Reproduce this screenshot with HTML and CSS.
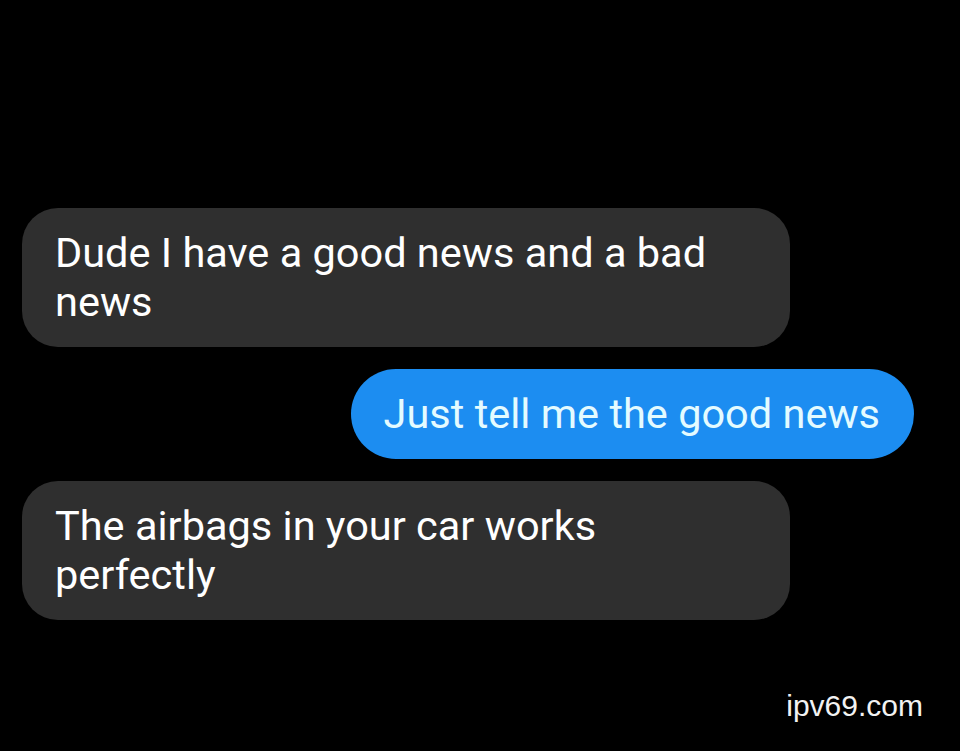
FILE: index.html
```html
<!DOCTYPE html>
<html lang="en">
<head>
  <meta charset="UTF-8">
  <meta name="viewport" content="width=device-width, initial-scale=1.0">
  <title>Good news</title>
  <link rel="stylesheet" href="styles.css">
</head>
<body>
  <div class="chat">
    <div class="bubble incoming">Dude I have a good news and a bad news</div>
    <div class="bubble outgoing">Just tell me the good news</div>
    <div class="bubble incoming">The airbags in your car works perfectly</div>
  </div>
  <div class="watermark">ipv69.com</div>
</body>
</html>
```

FILE: styles.css
```css
html, body {
  height: 100%;
}
body {
  margin: 0;
  background-color: #000;
  font-family: Roboto, "Noto Sans", sans-serif;
  position: relative;
  overflow: hidden;
}
.chat {
  display: flex;
  flex-direction: column;
  align-items: flex-start;
  gap: 22px;
  padding: 208px 46px 0 22px;
}
.bubble {
  box-sizing: border-box;
  font-size: 41.5px;
  line-height: 49px;
  color: #fff;
  padding: 20px 34px 21px 33px;
}
.incoming {
  width: 768px;
  background-color: #2f2f2f;
  border-radius: 36px;
}
.outgoing {
  align-self: flex-end;
  background-color: #1c8df1;
  color: #e4fbff;
  border-radius: 45px;
}
.watermark {
  position: absolute;
  right: 37px;
  bottom: 28px;
  font-family: "Liberation Sans", Arial, sans-serif;
  font-size: 30px;
  color: #f2f2f2;
}
```
